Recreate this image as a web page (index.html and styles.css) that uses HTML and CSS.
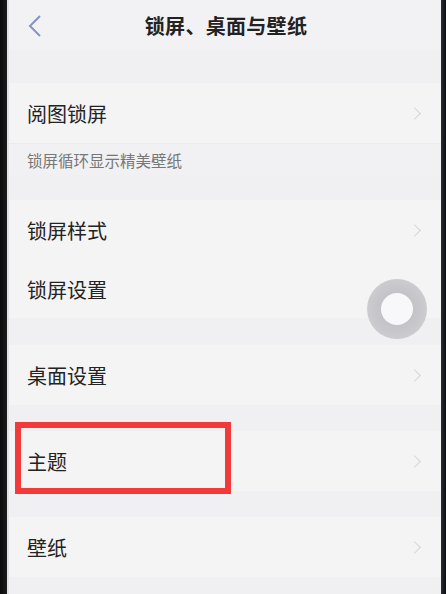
FILE: index.html
```html
<!DOCTYPE html>
<html lang="zh">
<head>
<meta charset="utf-8">
<link rel="stylesheet" href="styles.css">
</head>
<body>
<div class="device">
  <div class="bezel-left"></div>
  <div class="screen">
    <header class="topbar">
      <svg class="back" width="16" height="24" viewBox="0 0 16 24"><path d="M13 2 L3 12 L13 22" fill="none" stroke="#8396c2" stroke-width="2"/></svg>
      <h1 class="title">锁屏、桌面与壁纸</h1>
    </header>

    <div class="group g1">
      <div class="row"><span class="label">阅图锁屏</span><span class="chev"></span></div>
      <div class="hint">锁屏循环显示精美壁纸</div>
    </div>

    <div class="group g2">
      <div class="row"><span class="label">锁屏样式</span><span class="chev"></span></div>
      <div class="row r-tight"><span class="label">锁屏设置</span></div>
    </div>

    <div class="group g3">
      <div class="row"><span class="label">桌面设置</span><span class="chev"></span></div>
    </div>

    <div class="group g4">
      <div class="row"><span class="label">主题</span><span class="chev"></span></div>
    </div>

    <div class="group g5">
      <div class="row"><span class="label">壁纸</span><span class="chev"></span></div>
    </div>

    <div class="highlight"></div>
    <div class="float-ball"><div class="float-inner"></div></div>
  </div>
  <div class="bezel-right"></div>
</div>
</body>
</html>
```
FILE: styles.css
```css
* { box-sizing: border-box; margin: 0; padding: 0; }
html, body { width: 446px; height: 594px; overflow: hidden; }
body {
  background: #111;
  font-family: "Noto Sans CJK SC", "Noto Sans", sans-serif;
  color: #222;
}
.device { display: flex; width: 446px; height: 594px; }
.bezel-left { width: 7px; background: linear-gradient(90deg, #0a0a0a, #1c1c1e); }
.bezel-right { width: 5px; background: linear-gradient(90deg, #2a2d36, #0c0d12); }
.screen {
  position: relative;
  flex: 1;
  background: #f0f0f2;
  border-left: 2px solid #e2e2e4;
  overflow: hidden;
}
.topbar {
  height: 50px;
  display: flex;
  align-items: center;
  justify-content: center;
  position: relative;
  background: #f2f2f4;
}
.back { position: absolute; left: 18px; top: 14px; }
.title {
  font-size: 20px;
  font-weight: 700;
  color: #222;
  letter-spacing: 0.3px;
  margin-left: 2px;
}
.group { background: #f4f4f5; }
.g1 { margin-top: 33px; }
.g2 { margin-top: 25px; }
.g3 { margin-top: 27px; }
.g4 { margin-top: 26px; }
.g5 { margin-top: 26px; }
.row {
  height: 60px;
  display: flex;
  align-items: center;
  justify-content: space-between;
  padding: 0 22px 0 18px;
}
.r-tight { height: 58px; }
.label { font-size: 20px; color: #232323; }
.chev {
  width: 9px; height: 9px;
  border-top: 1.5px solid #d4d4d8;
  border-right: 1.5px solid #d4d4d8;
  transform: rotate(45deg);
}
.hint {
  height: 32px;
  display: flex;
  align-items: center;
  padding-left: 18px;
  font-size: 15.5px;
  color: #777;
  border-top: 1px solid #eaeaec;
  background: #f1f1f3;
}
.highlight {
  position: absolute;
  left: 6px; top: 422px;
  width: 216px; height: 72px;
  border: 6px solid #f23a3a;
}
.float-ball {
  position: absolute;
  left: 358px; top: 279px;
  width: 60px; height: 60px;
  border-radius: 50%;
  background: radial-gradient(circle, #b9b9be 0%, #c9c9cd 60%, #d6d6d9 100%);
  display: flex; align-items: center; justify-content: center;
}
.float-inner {
  width: 32px; height: 32px;
  border-radius: 50%;
  background: #f8f8fa;
}
```
